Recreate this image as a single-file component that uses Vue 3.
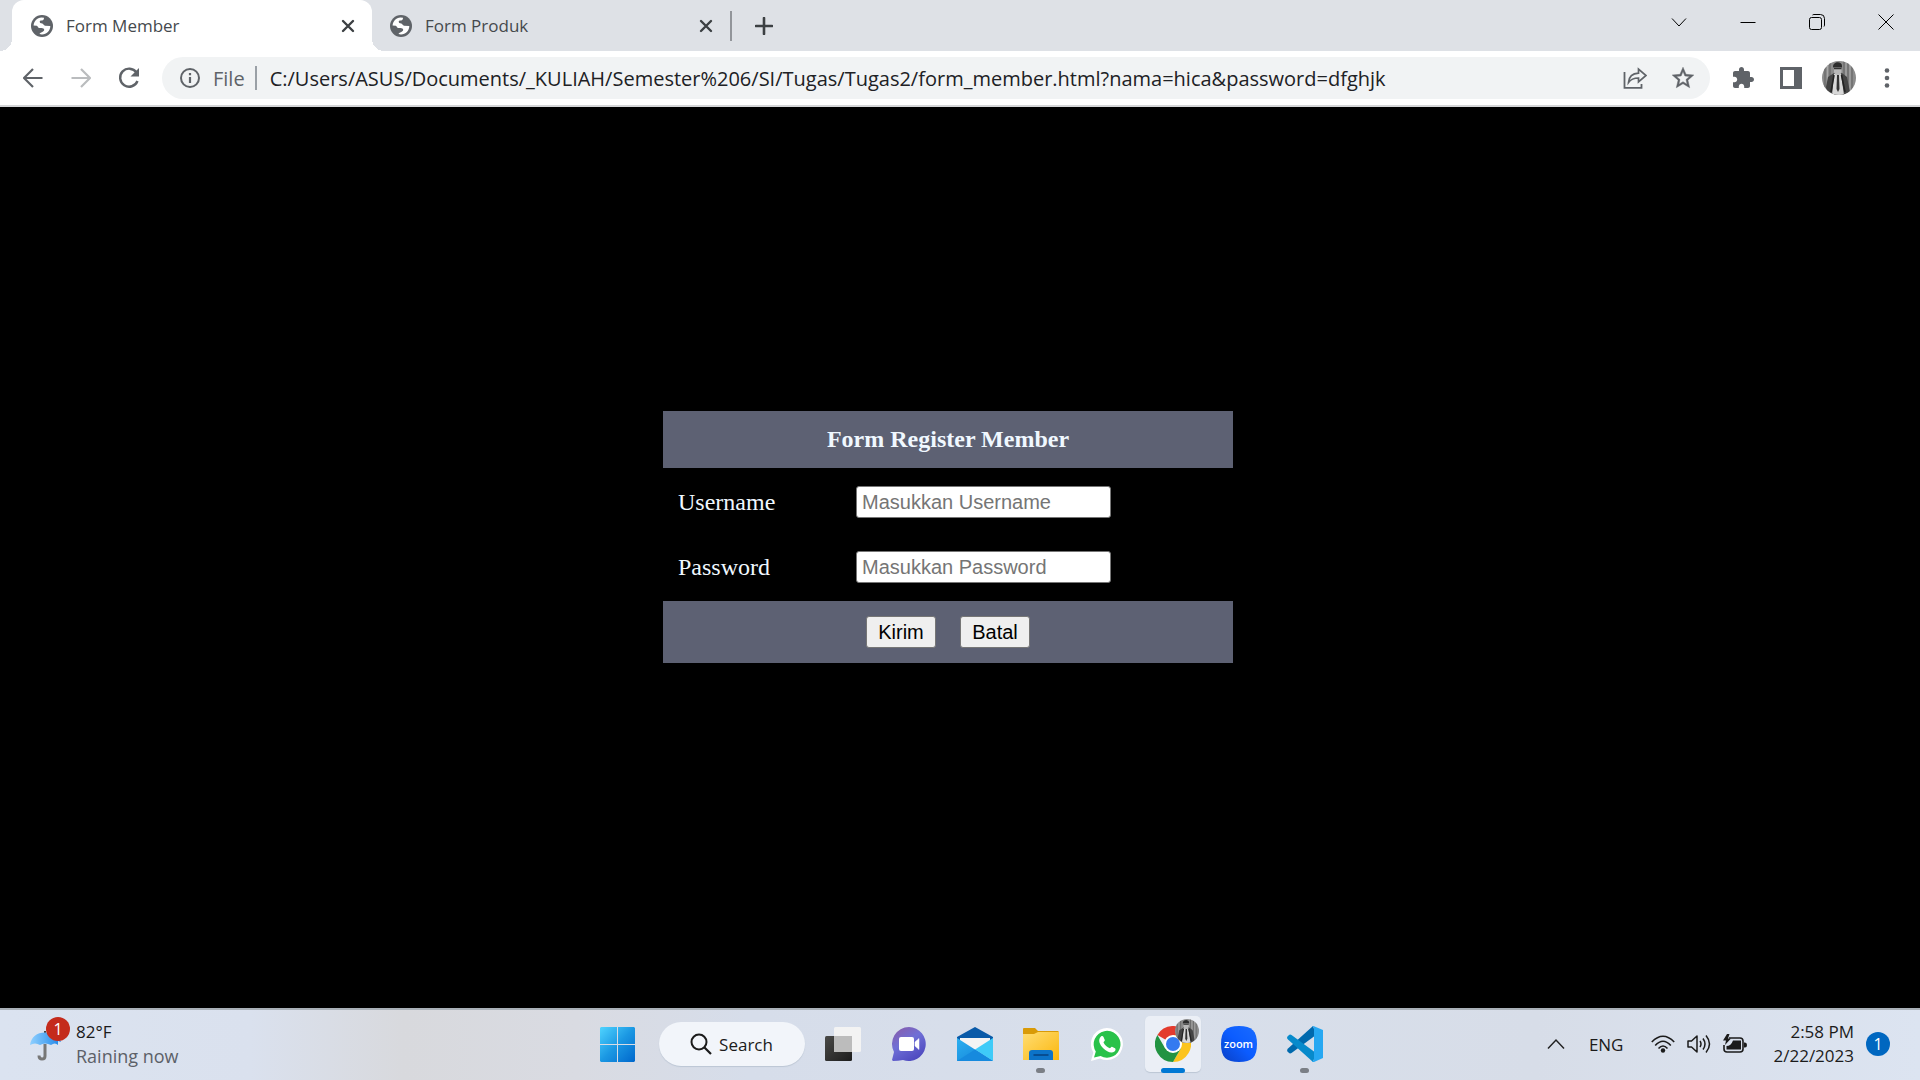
<script setup>
import { ref } from 'vue'

const tabs = [
  { title: 'Form Member', active: true },
  { title: 'Form Produk', active: false },
]
const address = ref('C:/Users/ASUS/Documents/_KULIAH/Semester%206/SI/Tugas/Tugas2/form_member.html?nama=hica&password=dfghjk')
const username = ref('')
const password = ref('')
</script>

<template>
  <div class="desktop">
    <svg class="defs" width="0" height="0" aria-hidden="true">
      <defs>
        <clipPath id="round"><circle cx="17" cy="17" r="17" /></clipPath>
        <linearGradient id="win" x1="0" y1="0" x2="1" y2="1"><stop offset="0" stop-color="#4fd4ff" /><stop offset=".5" stop-color="#1b98e3" /><stop offset="1" stop-color="#0067cc" /></linearGradient>
        <linearGradient id="chat" x1="0" y1="0" x2="0.6" y2="1"><stop offset="0" stop-color="#8b5aa5" /><stop offset=".5" stop-color="#6f6fd6" /><stop offset="1" stop-color="#4f4bc0" /></linearGradient>
        <linearGradient id="mail" x1="0" y1="0" x2="1" y2="1"><stop offset="0" stop-color="#2bb0f0" /><stop offset="1" stop-color="#1380d8" /></linearGradient>
        <linearGradient id="folder" x1="0" y1="0" x2="1" y2="1"><stop offset="0" stop-color="#ffdd73" /><stop offset="1" stop-color="#fbb70e" /></linearGradient>
        <linearGradient id="zoomBg" x1="1" y1="0" x2="0" y2="1"><stop offset="0" stop-color="#1a6cff" /><stop offset=".5" stop-color="#0b5cff" /><stop offset="1" stop-color="#0a3fc4" /></linearGradient>
        <linearGradient id="dark" x1="0" y1="0" x2="1" y2="1"><stop offset="0" stop-color="#4a4a48" /><stop offset="1" stop-color="#1c1c1c" /></linearGradient>
        <linearGradient id="umb" x1="0" y1="0" x2="1" y2="0"><stop offset="0" stop-color="#8fd0ff" /><stop offset="1" stop-color="#1f86e8" /></linearGradient>
        <symbol id="globe" viewBox="0 0 22 22">
          <circle cx="11" cy="11" r="11" fill="#5f6368" />
          <path d="M2.600 10.500C2.800 6.400 6 3 10.500 2.600L13 2.800C13.200 5 11.800 5.600 10 5.600 8.600 5.600 8.400 7 9.200 8L11.200 8.600C12.600 9 12.800 10.600 14 10.800L19.300 11C19.300 15.600 15.600 19.300 11 19.400L8.500 19C9 17.400 12.800 17.200 13.200 15 13.400 13.600 12 12.900 10.500 12.900H8C6.800 12.900 7 11 5.800 10.800Z" fill="#fff" />
        </symbol>
        <symbol id="portrait" viewBox="0 0 34 34">
          <g clip-path="url(#round)">
            <rect width="34" height="34" fill="#8c8c8c" />
            <path d="M3 0V34M8 0V34M22 0V34M26 0V34M30 0V34" stroke="#6e6e6e" stroke-width="1.500" />
            <path d="M5.500 0V34M24 0V34M28 0V34" stroke="#a8a8a8" />
            <path d="M6 16 12 12H20L25 16 28 31 24 34H5L4 26Z" fill="#444" />
            <path d="M12 13 19 13 22 34H10Z" fill="#d8d8d8" />
            <path d="M15 14H17L17.500 28 16 31 14.500 28Z" fill="#333" />
            <rect x="12" y="3" width="7.500" height="11" rx="3.500" fill="#b8b8b8" />
            <path d="M11 6C11 0 20 0 20 5V6.500H11.500Z" fill="#2c2c2c" />
            <path d="M12 7.500H19.500" stroke="#333" stroke-width="1.400" />
            <path d="M12 14 9 31M19.500 14 23 31" stroke="#222" stroke-width="1.600" />
          </g>
        </symbol>
      </defs>
    </svg>

    <header class="browser">
      <div class="strip">
        <div v-for="t in tabs" :key="t.title" class="tab" :class="{ active: t.active }">
          <svg class="globe" width="22" height="22"><use href="#globe" /></svg>
          <span class="tab-title">{{ t.title }}</span>
          <button class="close" :aria-label="'Close ' + t.title">
            <svg width="14" height="14" viewBox="0 0 14 14"><path d="M2 2 12 12M12 2 2 12" stroke="#3c4043" stroke-width="2.400" stroke-linecap="round" /></svg>
          </button>
        </div>
        <span class="tab-sep"></span>
        <button class="new-tab" aria-label="New tab">
          <svg width="18" height="18" viewBox="0 0 18 18"><path d="M9 1V17M1 9H17" stroke="#3c4043" stroke-width="2.600" stroke-linecap="round" /></svg>
        </button>
        <div class="window-controls">
          <button aria-label="Search tabs"><svg width="16" height="16" viewBox="0 0 16 16"><path d="M1 4.500 8 12 15 4.500" /></svg></button>
          <button aria-label="Minimize"><svg width="16" height="16" viewBox="0 0 16 16"><path d="M.5 8.500H15.500" /></svg></button>
          <button aria-label="Restore"><svg width="16" height="16" viewBox="0 0 16 16"><rect x=".5" y="3.500" width="12" height="12" rx="2" /><path d="M3.500 1Q4 .5 5 .5H11.500Q15.500 .5 15.500 4.500V11Q15.500 12 15 12.500" /></svg></button>
          <button aria-label="Close"><svg width="16" height="16" viewBox="0 0 16 16"><path d="M.5 .5 15.500 15.500M15.500 .5 .5 15.500" /></svg></button>
        </div>
      </div>

      <div class="toolbar">
        <button class="tool" aria-label="Back"><svg width="20" height="20" viewBox="0 0 20 20"><path d="M19.500 10H1.500M10 1 1 10 10 19" fill="none" stroke="#5f6368" stroke-width="2.200" /></svg></button>
        <button class="tool" aria-label="Forward"><svg width="20" height="20" viewBox="0 0 20 20"><path d="M.5 10H18.500M10 1 19 10 10 19" fill="none" stroke="#babcbe" stroke-width="2.200" /></svg></button>
        <button class="tool" aria-label="Reload"><svg width="22" height="22" viewBox="0 0 22 22"><path d="M18.500 5.500A9 9 0 1 0 19.500 14" fill="none" stroke="#5f6368" stroke-width="2.400" /><path d="M21 1V9.500H12.500Z" fill="#5f6368" /></svg></button>
        <div class="omnibox">
          <svg class="info" width="20" height="20" viewBox="0 0 20 20"><circle cx="10" cy="10" r="9" fill="none" stroke="#5f6368" stroke-width="2" /><path d="M10 9V15M10 5V7.200" stroke="#5f6368" stroke-width="2.200" /></svg>
          <label for="address">File</label>
          <span class="bar"></span>
          <input id="address" v-model="address" type="text" spellcheck="false" />
          <button class="tool" aria-label="Share"><svg width="24" height="24" viewBox="0 0 24 24"><path d="M1.500 6V21.800H18.500V18" fill="none" stroke="#5f6368" stroke-width="1.800" /><path d="M5.500 16.500C6 10.500 10 7.500 15.500 7.200V3L23 9.500 15.500 16V12C11 12 8 13 5.500 16.500Z" fill="none" stroke="#5f6368" stroke-width="1.700" /></svg></button>
          <button class="tool" aria-label="Bookmark"><svg width="26" height="26" viewBox="0 0 24 24"><path d="M22 9.240l-7.190-.62L12 2 9.190 8.630 2 9.240l5.460 4.730L5.820 21 12 17.270 18.180 21l-1.630-7.030L22 9.240zM12 15.400l-3.760 2.270 1-4.280-3.320-2.880 4.380-.38L12 6.100l1.710 4.040 4.380.38-3.320 2.880 1 4.280L12 15.400z" fill="#5f6368" stroke="#5f6368" stroke-width=".4" /></svg></button>
        </div>
        <button class="tool" aria-label="Extensions"><svg width="24" height="24" viewBox="0 0 24 24"><path d="M20.500 11H19V7c0-1.100-.9-2-2-2h-4V3.500C13 2.120 11.880 1 10.500 1S8 2.120 8 3.500V5H4c-1.100 0-1.990.9-1.990 2v3.800H3.500c1.490 0 2.700 1.210 2.700 2.700s-1.210 2.700-2.700 2.700H2V20c0 1.100.9 2 2 2h3.800v-1.500c0-1.490 1.210-2.700 2.700-2.700 1.490 0 2.700 1.210 2.700 2.700V22H17c1.100 0 2-.9 2-2v-4h1.500c1.380 0 2.500-1.120 2.500-2.500S21.880 11 20.500 11z" fill="#5f6368" /></svg></button>
        <button class="tool" aria-label="Side panel"><svg width="22" height="22" viewBox="0 0 22 22"><path d="M0 0H22V22H0ZM3 3V19H14V3Z" fill="#5f6368" fill-rule="evenodd" /></svg></button>
        <button class="tool" aria-label="Profile"><svg width="34" height="34"><use href="#portrait" /></svg></button>
        <button class="tool" aria-label="Menu"><svg width="6" height="20" viewBox="0 0 6 20"><g fill="#5f6368"><circle cx="3" cy="2.500" r="2.300" /><circle cx="3" cy="10" r="2.300" /><circle cx="3" cy="17.500" r="2.300" /></g></svg></button>
      </div>
    </header>

    <main class="page">
      <form class="register" @submit.prevent>
        <h1>Form Register Member</h1>
        <div class="fields">
          <label for="nama">Username</label>
          <input id="nama" v-model="username" type="text" placeholder="Masukkan Username" />
          <label for="password">Password</label>
          <input id="password" v-model="password" type="password" placeholder="Masukkan Password" />
        </div>
        <div class="actions">
          <button type="submit">Kirim</button>
          <button type="reset">Batal</button>
        </div>
      </form>
    </main>

    <footer class="taskbar">
      <div class="weather">
        <div class="weather-icon">
          <svg width="32" height="32" viewBox="0 0 32 32"><path d="M15 14V26Q15 29 12 29 9 29 9 25.500" fill="none" stroke="#777" stroke-width="3" /><path d="M15 1V4" stroke="#444" stroke-width="2" /><path d="M0 15C1 7 7 2.500 15 2.500S30 8 31 12L28 11 28 15Q25 12 21 15 15 12 10 15 5 12 0 15Z" fill="url(#umb)" /></svg>
          <span class="badge red">1</span>
        </div>
        <div class="lines"><span>82°F</span><span class="muted">Raining now</span></div>
      </div>

      <nav class="apps">
        <button class="app" aria-label="Start"><svg width="35" height="35" viewBox="0 0 35 35"><path d="M1 0H17V17H0V1ZM18 0H34L35 1V17H18ZM0 18H17V35H1L0 34ZM18 18H35V34L34 35H18Z" fill="url(#win)" /></svg></button>
        <button class="search">
          <svg width="22" height="22" viewBox="0 0 22 22"><circle cx="9" cy="9" r="7.500" fill="none" stroke="#1b1b1b" stroke-width="2" /><path d="M14.500 14.500 21 21" stroke="#1b1b1b" stroke-width="2.200" /></svg>
          <span>Search</span>
        </button>
        <button class="app" aria-label="Task view"><svg width="36" height="34" viewBox="0 0 36 34"><rect y="9" width="27" height="25" rx="1.500" fill="url(#dark)" /><rect x="9" width="27" height="25" rx="1.500" fill="#f3f3f3" /><rect x="9" y="9" width="18" height="16" fill="#bcbcbc" /></svg></button>
        <button class="app" aria-label="Chat"><svg width="34" height="34" viewBox="0 0 34 34"><path d="M17 0A17 17 0 1 1 11 33Q6 34 1 34L0 33 2 25A17 17 0 0 1 17 0Z" fill="url(#chat)" /><rect x="7" y="10" width="15" height="14" rx="2" fill="#fff" /><path d="M23 15 27 11.500V22.500L23 19Z" fill="#fff" stroke="#fff" stroke-width=".5" /></svg></button>
        <button class="app" aria-label="Mail"><svg width="36" height="34" viewBox="0 0 36 34"><path d="M0 10 18 0 36 10V17H0Z" fill="#0a5aa8" /><path d="M3 11H33V24H3Z" fill="#f4f4f4" /><path d="M0 11 36 34H0Z" fill="url(#mail)" /><path d="M36 11 18 22.500 36 34Z" fill="#3fcbf8" /><path d="M0 34 18 22.500 36 34Z" fill="#168ade" /></svg></button>
        <button class="app" aria-label="File Explorer"><svg width="36" height="34" viewBox="0 0 36 34"><path d="M0 2Q0 1 1 1H12L15 4H35L36 5V12H0Z" fill="#d99a07" /><path d="M0 7H11L15 5H36V33H0Z" fill="url(#folder)" /><path d="M6 33V26Q6 23 9 23H27Q30 23 30 26V33Z" fill="#0c73c8" /><path d="M10.500 28H25.500" stroke="#074d91" stroke-width="2" /></svg><i class="run"></i></button>
        <button class="app" aria-label="WhatsApp"><svg width="32" height="33" viewBox="0 0 32 33"><path d="M0 33 2.300 24.500A16 16 0 1 1 9 30.500Z" fill="#fff" /><path d="M3 29.500 4.800 23.500A13.400 13.400 0 1 1 9.600 28Z" fill="#29c24a" /><path d="M10 8.500C11 7.700 12 8 12.500 9L13.800 12C14 13 12.800 13.600 12.500 14.500 14 17.500 16 19.200 18.800 20.300 19.600 19.800 20.200 18.400 21 18.700L24 20.200C25 20.800 24.500 22.500 23.500 23.500 20.500 26 15.500 23.500 12.500 20.500 8.500 16.500 6.500 12 10 8.500Z" fill="#fff" /></svg></button>
        <button class="app current" aria-label="Google Chrome">
          <svg width="36" height="36" viewBox="0 0 36 36"><path d="M18 18 2.400 9A18 18 0 0 1 33.600 9H18Z" fill="#e33b2e" /><path d="M33.600 9A18 18 0 0 1 18 36L25.800 22.500 18 9Z" fill="#fcc41d" /><path d="M2.400 9A18 18 0 0 0 18 36L25.800 22.500H10.200Z" fill="#229342" /><circle cx="18" cy="18" r="9" fill="#fff" /><circle cx="18" cy="18" r="7" fill="#347af0" /></svg>
          <svg class="mini" width="24" height="24"><use href="#portrait" /></svg>
          <i class="run wide"></i>
        </button>
        <button class="app" aria-label="Zoom"><span class="zoom"><svg width="36" height="36" viewBox="0 0 36 36"><path d="M18 0C31 0 36 5 36 18S31 36 18 36 0 31 0 18 5 0 18 0Z" fill="url(#zoomBg)" /></svg><span>zoom</span></span></button>
        <button class="app" aria-label="Visual Studio Code"><svg width="36" height="36" viewBox="0 0 36 36"><path d="M26 0 29 9 4.500 27 Q3 28 1.500 26.500L.5 25.500Q-.5 24 1 22.500Z" fill="#0069ad" /><path d="M26 36 29 27 4.500 9Q3 8 1.500 9.500L.5 10.500Q-.5 12 1 13.500Z" fill="#078acb" /><path d="M25 0 27 .2 36 4V32L27 36H25L27 34V2Z" fill="#27a8f2" /></svg><i class="run"></i></button>
      </nav>

      <div class="tray">
        <button class="chev" aria-label="Show hidden icons"><svg width="18" height="12" viewBox="0 0 18 12"><path d="M1 10.500 9 2 17 10.500" fill="none" stroke="#222" stroke-width="1.500" /></svg></button>
        <span class="lang">ENG</span>
        <div class="status">
          <svg width="24" height="18" viewBox="0 0 24 18"><g fill="none" stroke="#1b1b1b" stroke-width="1.600"><path d="M.8 7Q12-4.500 23.200 7" /><path d="M4.200 10.500Q12 2 19.800 10.500" /><path d="M7.500 13.500Q12 8.500 16.500 13.500" /></g><circle cx="12" cy="15.500" r="2.200" fill="#1b1b1b" /></svg>
          <svg width="24" height="20" viewBox="0 0 24 20"><g fill="none" stroke="#1b1b1b" stroke-width="1.500"><path d="M1 7H4.500L10 2V18L4.500 13H1Z" stroke-linejoin="round" /><path d="M13 7Q15 10 13 13M16 4.500Q20 10 16 15.500M19 1.500Q26 10 19 18.500" /></g></svg>
          <svg width="24" height="20" viewBox="0 0 24 20"><path d="M6 4H17Q20 4 20 7V15Q20 18 17 18H4Q1 18 1 15V11" fill="none" stroke="#1b1b1b" stroke-width="1.600" /><path d="M10 6.500H18V15.500H3.500V12Q8 12 10 6.500ZM21 8.500H22Q24 8.500 24 11T22 13.500H21ZM4 0 0 6.500H3L2 11 8 4.500H5L6.500 0Z" fill="#1b1b1b" /></svg>
        </div>
        <div class="lines clock"><span>2:58 PM</span><span>2/22/2023</span></div>
        <span class="badge">1</span>
      </div>
    </footer>
  </div>
</template>

<style>
body { margin: 0; }
</style>

<style scoped>
* { box-sizing: border-box; }
.desktop {
  display: flex;
  flex-direction: column;
  min-height: 100vh;
  background: #000;
  font-family: "Open Sans", "Noto Sans", sans-serif;
}
.defs { position: absolute; }
svg { display: block; flex: none; }
button { margin: 0; padding: 0; border: 0; background: none; font: inherit; color: inherit; }

.browser { background: #fff; border-bottom: 2px solid #d5d6d8; }
.strip { display: flex; height: 51px; padding-left: 12px; background: #dee1e6; }
.tab {
  position: relative;
  display: flex;
  align-items: center;
  width: 358px;
  padding: 0 16px 0 18px;
  color: #45494d;
  font-size: 17px;
}
.tab.active { width: 360px; padding-left: 19px; border-radius: 12px 12px 0 0; background: #fff; }
.tab.active::before, .tab.active::after {
  content: "";
  position: absolute;
  bottom: 0;
  width: 12px;
  height: 12px;
}
.tab.active::before { left: -12px; background: radial-gradient(circle at 0 0, transparent 12px, #fff 12px); }
.tab.active::after { right: -12px; background: radial-gradient(circle at 100% 0, transparent 12px, #fff 12px); }
.tab-title { flex: 1; margin-left: 13px; }
.close { display: grid; place-items: center; width: 16px; height: 24px; }
.tab-sep { width: 2px; height: 30px; margin-top: 11px; background: #92959a; }
.new-tab { display: grid; place-items: center; width: 64px; }
.window-controls { display: flex; margin-left: auto; }
.window-controls button { display: grid; place-items: center; width: 69px; height: 43px; }
.window-controls svg { fill: none; stroke: #000; stroke-width: 1; }

.toolbar { display: flex; align-items: center; padding: 6px 9px; }
.tool { display: grid; place-items: center; width: 48px; height: 42px; flex: none; }
.omnibox {
  display: flex;
  flex: 1;
  align-items: center;
  height: 42px;
  margin: 0 9px;
  padding: 0 3px 0 18px;
  border-radius: 21px;
  background: #f1f3f4;
  color: #5f6368;
  font-size: 20px;
}
.omnibox label { margin-left: 13px; }
.bar { width: 2px; height: 24px; margin: 0 13px 0 10px; background: #9aa0a6; }
.omnibox input {
  flex: 1;
  min-width: 0;
  padding: 0;
  border: 0;
  outline: 0;
  background: none;
  color: #202124;
  font: inherit;
}

.page {
  display: flex;
  flex: 1;
  align-items: center;
  justify-content: center;
  padding: 0 24px 41px 0;
  font-family: "Liberation Serif", serif;
  color: #f0f8ff;
}
.register { width: 570px; font-size: 24px; }
h1 { margin: 0; padding: 15px; background: #5d6173; font-size: 24px; line-height: 27px; text-align: center; }
.fields {
  display: grid;
  grid-template-columns: 178px 255px;
  align-items: center;
  row-gap: 33px;
  padding: 18px 15px;
}
.fields input {
  width: 255px;
  height: 32px;
  padding: 0 5px;
  border: 1px solid #767676;
  border-radius: 3px;
  outline: 0;
  background: #fff;
  font: 20px "Liberation Sans", sans-serif;
}
.fields input::placeholder { color: #757575; }
.actions { display: flex; justify-content: center; gap: 24px; padding: 15px; background: #5d6173; }
.actions button {
  width: 70px;
  height: 32px;
  border: 1px solid #767676;
  border-radius: 3px;
  background: #efefef;
  color: #000;
  font: 20px "Liberation Sans", sans-serif;
}

.taskbar {
  display: grid;
  grid-template-columns: 1fr auto 1fr;
  align-items: center;
  height: 72px;
  padding-bottom: 2px;
  border-top: 2px solid #a9b0b8;
  background: linear-gradient(90deg, #dbe3f0 0%, #dae1ee 13%, #d8d9dd 21%, #d9dbe2 30%, #d6ddea 39%, #d8dfeb 60%, #d7dde8 80%, #dce4f1 100%);
  color: #1b1b1b;
  font-size: 17px;
}
.weather { display: flex; align-items: center; padding-left: 30px; }
.weather-icon { position: relative; width: 46px; padding-top: 4px; }
.weather-icon .badge { position: absolute; top: -9px; left: 16px; }
.badge {
  width: 24px;
  height: 24px;
  border-radius: 50%;
  background: #0067c0;
  color: #fff;
  font-size: 16px;
  line-height: 24px;
  text-align: center;
}
.badge.red { background: #c42b1c; }
.lines { display: flex; flex-direction: column; line-height: 24px; }
.muted { color: #5c6068; font-size: 18px; }
.apps { display: flex; align-items: center; padding-left: 2px; }
.app { position: relative; display: grid; place-items: center; width: 66px; height: 56px; }
.search {
  display: flex;
  align-items: center;
  justify-content: center;
  gap: 7px;
  width: 146px;
  height: 44px;
  margin: 0 5px 0 8px;
  border-radius: 22px;
  background: #f2f5fa;
  box-shadow: 0 1px 1px #bcc6d4;
}
.current::before {
  content: "";
  position: absolute;
  inset: 0 5px;
  border-radius: 5px;
  background: #ebeff6;
  box-shadow: 0 1px 1px #bcc6d4;
}
.current svg { position: relative; }
.current .mini { position: absolute; top: 3px; right: 7px; }
.run { position: absolute; bottom: -1px; left: 28px; width: 9px; height: 5px; border-radius: 3px; background: #7b7f86; }
.run.wide { left: 21px; width: 24px; background: #0078d4; }
.zoom { display: grid; place-items: center; color: #fff; font-size: 11px; font-weight: 600; line-height: 14px; }
.zoom > * { grid-area: 1 / 1; }
.tray { display: flex; align-items: center; justify-content: flex-end; padding-right: 30px; }
.chev { display: grid; place-items: center; margin-right: 24px; }
.status { display: flex; gap: 12px; margin: 0 26px 0 28px; }
.status svg { align-self: center; }
.clock { text-align: right; margin-right: 12px; }
</style>
